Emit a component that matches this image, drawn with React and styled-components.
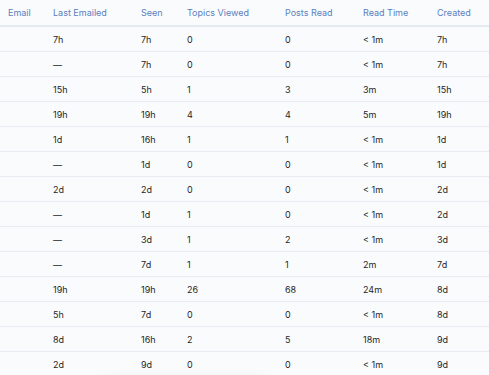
import styled, { createGlobalStyle } from "styled-components";

const GlobalStyle = createGlobalStyle`
	html, body {
		margin: 0;
		padding: 0;
		background: #fafbfc;
	}
	body {
		font-family: Inter, "Noto Sans", sans-serif;
		-webkit-font-smoothing: antialiased;
	}
`;

const COLUMNS = ["Email", "Last Emailed", "Seen", "Topics Viewed", "Posts Read", "Read Time", "Created"];

const ROWS = [
	["", "7h", "7h", "0", "0", "< 1m", "7h"],
	["", "—", "7h", "0", "0", "< 1m", "7h"],
	["", "15h", "5h", "1", "3", "3m", "15h"],
	["", "19h", "19h", "4", "4", "5m", "19h"],
	["", "1d", "16h", "1", "1", "< 1m", "1d"],
	["", "—", "1d", "0", "0", "< 1m", "1d"],
	["", "2d", "2d", "0", "0", "< 1m", "2d"],
	["", "—", "1d", "1", "0", "< 1m", "2d"],
	["", "—", "3d", "1", "2", "< 1m", "3d"],
	["", "—", "7d", "1", "1", "2m", "7d"],
	["", "19h", "19h", "26", "68", "24m", "8d"],
	["", "5h", "7d", "0", "0", "< 1m", "8d"],
	["", "8d", "16h", "2", "5", "18m", "9d"],
	["", "2d", "9d", "0", "0", "< 1m", "9d"],
];

const App = () => {
	return (
		<>
			<GlobalStyle />
			<Table>
				<HeaderRow>
					{COLUMNS.map((col) => (
						<HeaderCell key={col}>{col}</HeaderCell>
					))}
				</HeaderRow>
				{ROWS.map((row, i) => (
					<Row key={i}>
						{row.map((value, j) => (
							<Cell key={j}>{value}</Cell>
						))}
					</Row>
				))}
			</Table>
			<FloatingShadow />
		</>
	);
};

const Table = styled.div`
	display: flex;
	flex-direction: column;
	width: 489px;
	overflow: hidden;
`;

const grid = `
	display: grid;
	grid-template-columns: 53px 88px 46px 98px 78px 74px 1fr;
	align-items: center;
`;

const HeaderRow = styled.div`
	${grid}
	height: 25px;
	border-bottom: 2px solid #e4e8f1;
`;

const HeaderCell = styled.div`
	font-size: 9px;
	color: #5a7fc0;
	white-space: nowrap;

	&:first-child {
		padding-left: 8px;
	}
`;

const Row = styled.div`
	${grid}
	height: 24px;
	border-bottom: 1px solid #e8ebf1;
`;

const Cell = styled.div`
	font-size: 9px;
	color: #1f1f1f;
	white-space: nowrap;

	&:first-child {
		padding-left: 8px;
	}
`;

const FloatingShadow = styled.div`
	position: fixed;
	left: 100px;
	top: 380px;
	width: 170px;
	height: 40px;
	border-radius: 8px;
	box-shadow: 0 0 14px rgba(0, 0, 0, 0.08);
`;

export default App;
